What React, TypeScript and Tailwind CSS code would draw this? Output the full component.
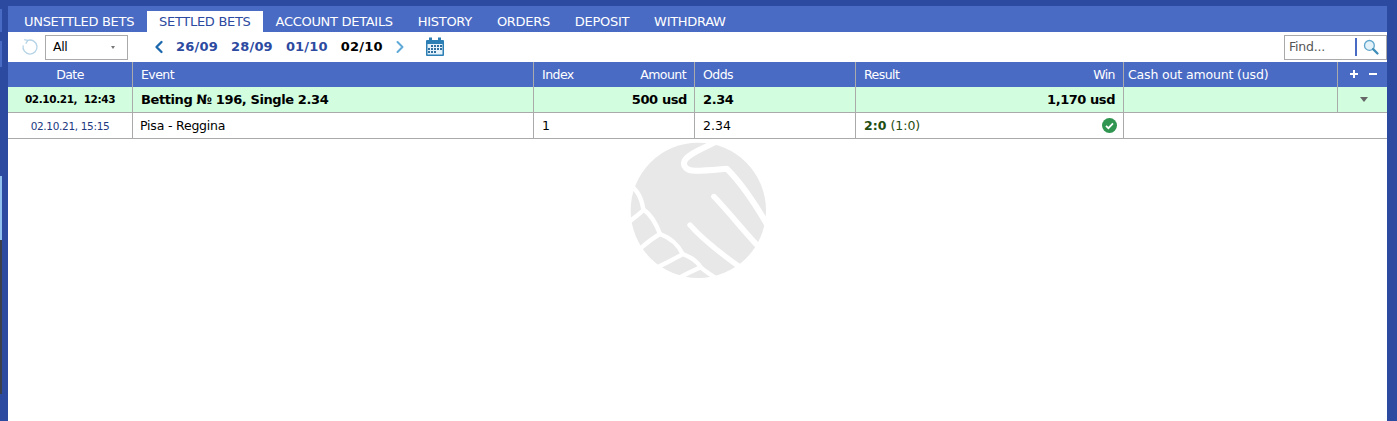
import { ChevronLeft, ChevronRight } from "lucide-react";

const TABS = ["UNSETTLED BETS", "SETTLED BETS", "ACCOUNT DETAILS", "HISTORY", "ORDERS", "DEPOSIT", "WITHDRAW"];
const COLS = "grid grid-cols-[125px_401px_161px_161px_268px_214px_49px]";
const CELL = "border-r border-[#aaaaaa] flex items-center";

function RefreshIcon() {
  return (
    <svg width="18" height="18" viewBox="0 0 18 18" fill="none" stroke="#b5d3e6" strokeWidth="1.3">
      <path d="M6.8 2.4A7 7 0 1 1 2.2 7.4" />
      <path d="M3.2 1.6 6.8 2.4 4.8 5.6" />
    </svg>
  );
}

function CalendarIcon() {
  return (
    <svg width="20" height="20" viewBox="0 0 20 20">
      <rect x="1" y="3" width="18" height="16" rx="1" fill="#2b7fb4" />
      <rect x="2.5" y="7" width="15" height="10.5" fill="#e6f2f9" />
      <rect x="4" y="0.5" width="3" height="4.5" fill="#2b7fb4" />
      <rect x="13" y="0.5" width="3" height="4.5" fill="#2b7fb4" />
      <g fill="#2f6f9f">
        <rect x="6" y="8" width="2" height="2" />
        <rect x="9" y="8" width="2" height="2" />
        <rect x="12" y="8" width="2" height="2" />
        <rect x="15" y="8" width="2" height="2" />
        <rect x="3" y="11" width="2" height="2" />
        <rect x="6" y="11" width="2" height="2" />
        <rect x="9" y="11" width="2" height="2" />
        <rect x="12" y="11" width="2" height="2" />
        <rect x="15" y="11" width="2" height="2" />
        <rect x="3" y="14" width="2" height="2" />
        <rect x="6" y="14" width="2" height="2" />
        <rect x="9" y="14" width="2" height="2" />
      </g>
    </svg>
  );
}

function SearchIcon() {
  return (
    <svg width="16" height="16" viewBox="0 0 17 17" fill="none">
      <circle cx="6.8" cy="6.8" r="5.2" fill="#e3f1f8" stroke="#5fa6cc" strokeWidth="1.4" />
      <path d="M10.8 10.8 15.4 15.4" stroke="#3f8db8" strokeWidth="2.4" strokeLinecap="round" />
    </svg>
  );
}

function CheckIcon() {
  return (
    <svg width="15" height="15" viewBox="0 0 15 15">
      <circle cx="7.5" cy="7.5" r="7.5" fill="#2f9550" />
      <path d="M4 7.8 6.4 10.2 11 5.4" fill="none" stroke="#fff" strokeWidth="1.8" />
    </svg>
  );
}

// handshake watermark behind the table
function Watermark() {
  return (
    <svg width="180" height="160" viewBox="0 0 540 480" fill="none" stroke="#fff" strokeLinecap="round" strokeLinejoin="round">
      <circle cx="265" cy="241" r="203" fill="#e8e8e8" stroke="none" />
      <path d="M312 38C270 60 235 72 224 92C216 110 232 122 255 122C290 122 325 118 350 116C395 160 435 220 478 295" strokeWidth="18" />
      <path d="M312 200C355 245 395 295 438 342" strokeWidth="17" />
      <path d="M240 285C275 325 325 365 385 408" strokeWidth="16" />
      <path d="M58 165C85 180 95 205 100 238C125 255 140 285 150 312C185 325 205 345 218 372C240 380 262 395 272 412C285 425 305 435 325 450" strokeWidth="13" />
      <path d="M55 278C70 265 85 255 100 240" strokeWidth="13" />
      <path d="M95 352C115 335 132 322 150 312" strokeWidth="13" />
      <path d="M150 408C175 395 198 385 218 372" strokeWidth="13" />
      <path d="M205 445C228 432 250 422 272 412" strokeWidth="13" />
      <path d="M60 290C62 320 72 350 100 400C120 420 140 415 150 425" strokeWidth="8" />
    </svg>
  );
}

export default function App() {
  return (
    <div
      className="flex h-[421px] w-[1397px] overflow-hidden bg-[#2c4a9f] text-[12.5px] text-black"
      style={{ fontFamily: '"DejaVu Sans", sans-serif' }}
    >
      {/* clipped window behind */}
      <div className="flex h-full w-[2px] flex-col">
        <div className="h-[9px]" />
        <div className="h-[23px] bg-[#4a6bc4]" />
        <div className="h-[9px]" />
        <div className="h-[26px] bg-[#4a6bc4]" />
        <div className="h-[109px]" />
        <div className="h-[64px] bg-[#8fc0ee]" />
        <div className="h-[154px] bg-[#3a3f4a]" />
      </div>

      <div className="ml-[6px] mr-[10px] mt-[6px] flex w-[1379px] flex-col">
        {/* Tabs */}
        <div className="flex h-[26px] items-end gap-[1px] bg-[#4a6bc4] pl-[4px]">
          {TABS.map((tab) => (
            <div
              key={tab}
              className={`flex h-[21px] items-center px-[12px] pt-[1px] text-[13px] tracking-[-0.3px] ${
                tab === "SETTLED BETS" ? "bg-white text-[#2c4a9f]" : "text-white"
              }`}
            >
              {tab}
            </div>
          ))}
        </div>

        {/* Toolbar */}
        <div className="flex h-[30px] items-center bg-white pl-[13px] pr-0">
          <RefreshIcon />
          <div className="ml-[6px] flex h-[25px] w-[83px] items-center justify-between border border-[#aaaaaa] pl-[7px] pr-[12px] tracking-[-0.4px]">
            All
            <span className="h-0 w-0 border-x-[2.5px] border-t-[3px] border-x-transparent border-t-[#777777]" />
          </div>
          <ChevronLeft className="ml-[21px] text-[#1c68ac]" size={20} strokeWidth={2.8} />
          <div className="ml-[7px] flex gap-[13px] text-[13px] font-bold tracking-[0.2px] text-[#2c4a9f]">
            <span>26/09</span>
            <span>28/09</span>
            <span>01/10</span>
            <span className="text-black">02/10</span>
          </div>
          <ChevronRight className="ml-[7px] text-[#5fa9d6]" size={20} strokeWidth={2.4} />
          <div className="ml-[15px]">
            <CalendarIcon />
          </div>
          <div className="ml-auto flex h-[25px] w-[103px] items-center border border-[#aaaaaa] pl-[4px] text-[#555555] tracking-[-0.2px]">
            <span className="w-[66px]">Find...</span>
            <span className="h-[18px] w-[2px] bg-[#4a6bc4]" />
            <span className="ml-[6px]">
              <SearchIcon />
            </span>
          </div>
        </div>

        {/* Table */}
        <div className="relative flex-1 bg-white">
          <div className={`${COLS} h-[25px] bg-[#4a6bc4] pt-0 text-white tracking-[-0.55px]`}>
            <div className={`${CELL} justify-center pt-[1px]`}>Date</div>
            <div className={`${CELL} pl-[8px] pt-[1px]`}>Event</div>
            <div className={`${CELL} justify-between pl-[8px] pr-[8px] pt-[1px]`}>
              <span>Index</span>
              <span>Amount</span>
            </div>
            <div className={`${CELL} pl-[8px] pt-[1px]`}>Odds</div>
            <div className={`${CELL} justify-between pl-[8px] pr-[8px] pt-[1px]`}>
              <span>Result</span>
              <span>Win</span>
            </div>
            <div className={`${CELL} pl-[4px] pt-[1px] tracking-[-0.15px]`}>Cash out amount (usd)</div>
            <div className="flex items-center justify-center gap-[11px] pb-[2px] pl-[2px]">
              <svg width="8" height="8" viewBox="0 0 8 8" fill="#fff">
                <path d="M3 0H5V3H8V5H5V8H3V5H0V3H3Z" />
              </svg>
              <svg width="8" height="8" viewBox="0 0 8 8" fill="#fff">
                <path d="M0 3H8V5H0Z" />
              </svg>
            </div>
          </div>

          <div className={`${COLS} h-[26px] border-b border-[#aaaaaa] bg-[#d2fddf] font-bold`}>
            <div className={`${CELL} justify-center pt-[1px] text-[10.5px] tracking-[-0.4px]`}>02.10.21,&nbsp; 12:43</div>
            <div className={`${CELL} pl-[8px] pt-[1px] text-[13px] tracking-[-0.4px]`}>Betting № 196, Single 2.34</div>
            <div className={`${CELL} justify-end pr-[7px] pt-[1px] text-[13px] tracking-[-0.4px]`}>500 usd</div>
            <div className={`${CELL} pl-[8px] pt-[1px] text-[13px] tracking-[-0.4px]`}>2.34</div>
            <div className={`${CELL} justify-end pr-[8px] pt-[1px] text-[13px] tracking-[-0.45px]`}>1,170 usd</div>
            <div className={CELL} />
            <div className="flex items-center justify-center pl-[3px]">
              <span className="h-0 w-0 border-x-[4px] border-t-[5px] border-x-transparent border-t-[#666666]" />
            </div>
          </div>

          <div className={`${COLS} h-[26px] border-b border-[#aaaaaa]`}>
            <div className={`${CELL} justify-center pt-[2px] text-[10.5px] tracking-[-0.33px] text-[#22397f]`}>02.10.21, 15:15</div>
            <div className={`${CELL} pl-[7px] pt-[2px] tracking-[-0.2px]`}>Pisa - Reggina</div>
            <div className={`${CELL} pl-[8px] pt-[2px]`}>1</div>
            <div className={`${CELL} pl-[8px] pt-[2px]`}>2.34</div>
            <div className={`${CELL} justify-between pl-[8px] pr-[6px] text-[#1f4d12]`}>
              <span className="pt-[2px]">
                <b>2:0</b> (1:0)
              </span>
              <CheckIcon />
            </div>
            <div />
            <div />
          </div>

          <div className="absolute left-[602px] top-[68px]">
            <Watermark />
          </div>
        </div>
      </div>
    </div>
  );
}
